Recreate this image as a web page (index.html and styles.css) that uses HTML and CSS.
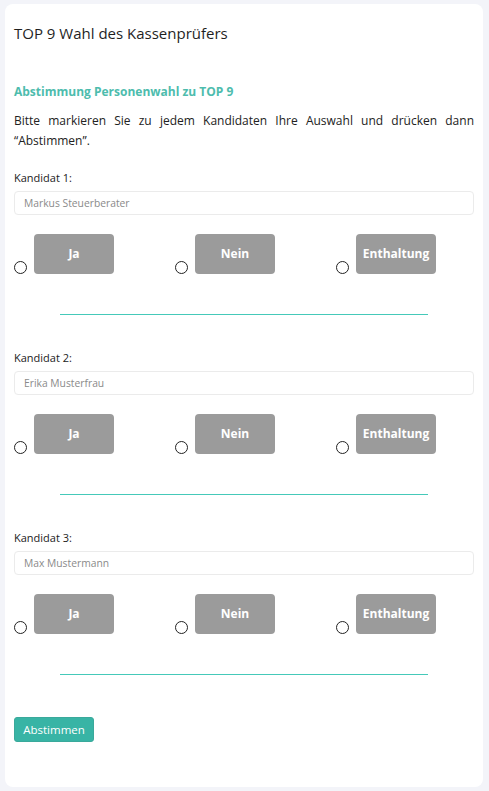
FILE: index.html
```html
<!DOCTYPE html>
<html lang="de">
<head>
<meta charset="utf-8">
<title>TOP 9 Wahl des Kassenprüfers</title>
<link rel="stylesheet" href="styles.css">
</head>
<body>
<div class="card">
  <h1 class="title">TOP 9 Wahl des Kassenprüfers</h1>
  <h2 class="subtitle">Abstimmung Personenwahl zu TOP 9</h2>
  <p class="intro">Bitte markieren Sie zu jedem Kandidaten Ihre Auswahl und drücken dann “Abstimmen”.</p>

  <div class="candidate">
    <label class="label">Kandidat 1:</label>
    <input class="name" type="text" placeholder="Markus Steuerberater">
    <div class="options">
      <div class="option"><span class="radio"></span><span class="vote">Ja</span></div>
      <div class="option"><span class="radio"></span><span class="vote">Nein</span></div>
      <div class="option"><span class="radio"></span><span class="vote">Enthaltung</span></div>
    </div>
    <hr class="sep">
  </div>

  <div class="candidate">
    <label class="label">Kandidat 2:</label>
    <input class="name" type="text" placeholder="Erika Musterfrau">
    <div class="options">
      <div class="option"><span class="radio"></span><span class="vote">Ja</span></div>
      <div class="option"><span class="radio"></span><span class="vote">Nein</span></div>
      <div class="option"><span class="radio"></span><span class="vote">Enthaltung</span></div>
    </div>
    <hr class="sep">
  </div>

  <div class="candidate">
    <label class="label">Kandidat 3:</label>
    <input class="name" type="text" placeholder="Max Mustermann">
    <div class="options">
      <div class="option"><span class="radio"></span><span class="vote">Ja</span></div>
      <div class="option"><span class="radio"></span><span class="vote">Nein</span></div>
      <div class="option"><span class="radio"></span><span class="vote">Enthaltung</span></div>
    </div>
    <hr class="sep">
  </div>

  <button class="submit" type="button">Abstimmen</button>
</div>
</body>
</html>
```
FILE: styles.css
```css
html, body {
  margin: 0;
  padding: 0;
}
body {
  background: #f3f4f9;
  font-family: "Open Sans", "Noto Sans", sans-serif;
  color: #222;
  padding: 4px 6px 4px 5px;
}
.card {
  background: #fff;
  border-radius: 8px;
  height: 783px;
  box-sizing: border-box;
  padding: 17px 9px 0 9px;
}
.title {
  margin: 0;
  font-size: 15px;
  font-weight: 400;
  line-height: 24px;
  color: #1f1f1f;
}
.subtitle {
  margin: 37px 0 0 0;
  font-size: 12px;
  font-weight: 700;
  line-height: 20px;
  color: #4dbcad;
}
.intro {
  margin: 9px 0 0 0;
  font-size: 12px;
  line-height: 20px;
  text-align: justify;
  color: #222;
}
.candidate {
  margin-top: 18px;
  display: flex;
  flex-direction: column;
}
.candidate + .candidate {
  margin-top: 34px;
}
.label {
  font-size: 11px;
  line-height: 18px;
  color: #222;
}
.name {
  margin-top: 4px;
  height: 24px;
  box-sizing: border-box;
  border: 1px solid #ebebeb;
  border-radius: 4px;
  padding: 0 9px;
  font-family: inherit;
  font-size: 10.3px;
  color: #444;
  outline: none;
}
.name::placeholder {
  color: #8a8a8a;
}
.options {
  margin-top: 19px;
  display: grid;
  grid-template-columns: 161px 161px 161px;
  height: 40px;
}
.option {
  display: flex;
  align-items: flex-end;
  gap: 7px;
}
.radio {
  width: 13px;
  height: 13px;
  box-sizing: border-box;
  border: 1.3px solid #222;
  border-radius: 50%;
  background: #fff;
}
.vote {
  width: 80px;
  height: 40px;
  border-radius: 4px;
  background: #9b9b9b;
  color: #fff;
  font-size: 12px;
  font-weight: 700;
  display: flex;
  align-items: center;
  justify-content: center;
  padding-bottom: 1px;
  box-sizing: border-box;
}
.sep {
  margin: 40px auto 0 auto;
  width: 80%;
  border: 0;
  height: 1px;
  background: #45c9b9;
}
.submit {
  margin-top: 42px;
  width: 80px;
  height: 25px;
  background: #38b4a5;
  border: 1px solid #3aa99b;
  border-radius: 3px;
  color: #fff;
  font-family: inherit;
  font-size: 11.5px;
  padding: 0;
}
```
